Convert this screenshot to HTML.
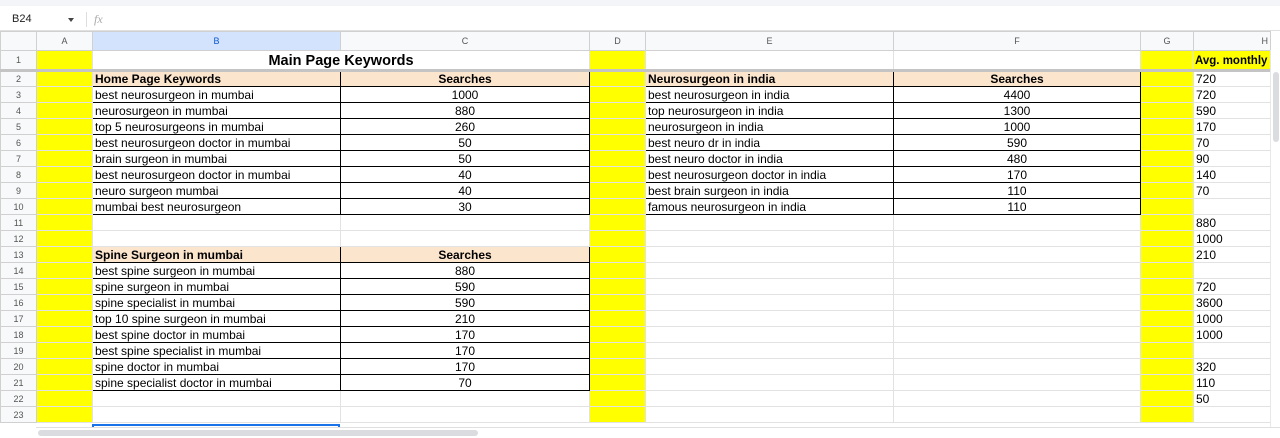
<!DOCTYPE html>
<html><head><meta charset="utf-8"><style>
*{box-sizing:border-box;margin:0;padding:0}
body{width:1280px;height:438px;overflow:hidden;background:#fff;font-family:"Liberation Sans",Arial,sans-serif;position:relative}
#fb{position:absolute;left:0;top:0;width:1280px;height:31px;background:#fff;border-bottom:1px solid #e0e0e0}
#fb .top{position:absolute;left:0;top:0;width:1280px;height:6px;background:#f3f5f8}
#fb .nm{position:absolute;left:12px;top:13px;font-size:11px;color:#222}
#fb .ar{position:absolute;left:68px;top:18px;width:0;height:0;border-left:3px solid transparent;border-right:3px solid transparent;border-top:4px solid #444}
#fb .sep{position:absolute;left:86px;top:12px;width:1px;height:15px;background:#ddd}
#fb .fx{position:absolute;left:94px;top:12px;font-size:12px;font-style:italic;color:#aaa;font-family:"Liberation Serif",serif}
table{position:absolute;left:0;top:31px;border-collapse:collapse;table-layout:fixed;width:1270px}
td{border:1px solid #e2e2e2;font-size:12px;color:#000;padding:0 2px;white-space:nowrap;overflow:hidden;height:16px;line-height:14px}
tr.h td{height:19px;background:#f8f9fa;color:#555;font-size:9px;text-align:center;border-color:#d0d0d0}
tr.h td.sel{background:#d3e3fd;color:#0b57d0}
td.rn{background:#f8f9fa;color:#555;font-size:9px;text-align:center;padding:0;border-color:#d0d0d0}
tr.r1 td{height:20px;border-bottom:3px solid #c4c4c4;line-height:16px;vertical-align:bottom}
.y{background:#ff0}
.k{border:1px solid #000 !important}
.p{background:#fce5cd}
.b{font-weight:bold}
.c{text-align:center}
#vs{position:absolute;left:1270px;top:50px;width:10px;height:388px;background:#fff;border-left:1px solid #e8e8e8}
#vs div{position:absolute;left:2px;top:22px;width:6px;height:70px;background:#dadce0;border-radius:3px}
#hs{position:absolute;left:36px;top:427px;width:1244px;height:11px;background:#fff;border-top:1px solid #e0e0e0}
#hs div{position:absolute;left:2px;top:2px;width:440px;height:6px;background:#dadce0;border-radius:3px}
#selc{position:absolute;left:92px;top:424px;width:248px;height:4px;border:2px solid #1a73e8;border-bottom:none}
</style></head><body>
<div id="fb"><div class="top"></div><span class="nm">B24</span><span class="ar"></span><span class="sep"></span><span class="fx">fx</span></div>
<table>
<colgroup><col style="width:36px"><col style="width:56px"><col style="width:248px"><col style="width:249px"><col style="width:56px"><col style="width:248px"><col style="width:247px"><col style="width:53px"><col style="width:77px"></colgroup>
<tr class="h"><td></td><td>A</td><td class="sel">B</td><td>C</td><td>D</td><td>E</td><td>F</td><td>G</td><td style="text-align:right">H</td></tr>
<tr class="r1"><td class="rn" style="vertical-align:middle">1</td><td class="y"></td><td colspan="2" class="b c" style="font-size:14.5px">Main Page Keywords</td><td class="y"></td><td></td><td></td><td class="y"></td><td class="y b" style="font-size:11.5px;padding:0 1px">Avg. monthly</td></tr>
<tr><td class="rn">2</td><td class="y"></td><td class="k p b">Home Page Keywords</td><td class="k p b c">Searches</td><td class="y"></td><td class="k p b">Neurosurgeon in india</td><td class="k p b c">Searches</td><td class="y"></td><td>720</td></tr>
<tr><td class="rn">3</td><td class="y"></td><td class="k">best neurosurgeon in mumbai</td><td class="k c">1000</td><td class="y"></td><td class="k">best neurosurgeon in india</td><td class="k c">4400</td><td class="y"></td><td>720</td></tr>
<tr><td class="rn">4</td><td class="y"></td><td class="k">neurosurgeon in mumbai</td><td class="k c">880</td><td class="y"></td><td class="k">top neurosurgeon in india</td><td class="k c">1300</td><td class="y"></td><td>590</td></tr>
<tr><td class="rn">5</td><td class="y"></td><td class="k">top 5 neurosurgeons in mumbai</td><td class="k c">260</td><td class="y"></td><td class="k">neurosurgeon in india</td><td class="k c">1000</td><td class="y"></td><td>170</td></tr>
<tr><td class="rn">6</td><td class="y"></td><td class="k">best neurosurgeon doctor in mumbai</td><td class="k c">50</td><td class="y"></td><td class="k">best neuro dr in india</td><td class="k c">590</td><td class="y"></td><td>70</td></tr>
<tr><td class="rn">7</td><td class="y"></td><td class="k">brain surgeon in mumbai</td><td class="k c">50</td><td class="y"></td><td class="k">best neuro doctor in india</td><td class="k c">480</td><td class="y"></td><td>90</td></tr>
<tr><td class="rn">8</td><td class="y"></td><td class="k">best neurosurgeon doctor in mumbai</td><td class="k c">40</td><td class="y"></td><td class="k">best neurosurgeon doctor in india</td><td class="k c">170</td><td class="y"></td><td>140</td></tr>
<tr><td class="rn">9</td><td class="y"></td><td class="k">neuro surgeon mumbai</td><td class="k c">40</td><td class="y"></td><td class="k">best brain surgeon in india</td><td class="k c">110</td><td class="y"></td><td>70</td></tr>
<tr><td class="rn">10</td><td class="y"></td><td class="k">mumbai best neurosurgeon</td><td class="k c">30</td><td class="y"></td><td class="k">famous neurosurgeon in india</td><td class="k c">110</td><td class="y"></td><td></td></tr>
<tr><td class="rn">11</td><td class="y"></td><td></td><td></td><td class="y"></td><td></td><td></td><td class="y"></td><td>880</td></tr>
<tr><td class="rn">12</td><td class="y"></td><td></td><td></td><td class="y"></td><td></td><td></td><td class="y"></td><td>1000</td></tr>
<tr><td class="rn">13</td><td class="y"></td><td class="k p b">Spine Surgeon in mumbai</td><td class="k p b c">Searches</td><td class="y"></td><td></td><td></td><td class="y"></td><td>210</td></tr>
<tr><td class="rn">14</td><td class="y"></td><td class="k">best spine surgeon in mumbai</td><td class="k c">880</td><td class="y"></td><td></td><td></td><td class="y"></td><td></td></tr>
<tr><td class="rn">15</td><td class="y"></td><td class="k">spine surgeon in mumbai</td><td class="k c">590</td><td class="y"></td><td></td><td></td><td class="y"></td><td>720</td></tr>
<tr><td class="rn">16</td><td class="y"></td><td class="k">spine specialist in mumbai</td><td class="k c">590</td><td class="y"></td><td></td><td></td><td class="y"></td><td>3600</td></tr>
<tr><td class="rn">17</td><td class="y"></td><td class="k">top 10 spine surgeon in mumbai</td><td class="k c">210</td><td class="y"></td><td></td><td></td><td class="y"></td><td>1000</td></tr>
<tr><td class="rn">18</td><td class="y"></td><td class="k">best spine doctor in mumbai</td><td class="k c">170</td><td class="y"></td><td></td><td></td><td class="y"></td><td>1000</td></tr>
<tr><td class="rn">19</td><td class="y"></td><td class="k">best spine specialist in mumbai</td><td class="k c">170</td><td class="y"></td><td></td><td></td><td class="y"></td><td></td></tr>
<tr><td class="rn">20</td><td class="y"></td><td class="k">spine doctor in mumbai</td><td class="k c">170</td><td class="y"></td><td></td><td></td><td class="y"></td><td>320</td></tr>
<tr><td class="rn">21</td><td class="y"></td><td class="k">spine specialist doctor in mumbai</td><td class="k c">70</td><td class="y"></td><td></td><td></td><td class="y"></td><td>110</td></tr>
<tr><td class="rn">22</td><td class="y"></td><td></td><td></td><td class="y"></td><td></td><td></td><td class="y"></td><td>50</td></tr>
<tr><td class="rn">23</td><td class="y"></td><td></td><td></td><td class="y"></td><td></td><td></td><td class="y"></td><td></td></tr>
</table>
<div id="selc"></div>
<div id="vs"><div></div></div>
<div id="hs"><div></div></div>
</body></html>
